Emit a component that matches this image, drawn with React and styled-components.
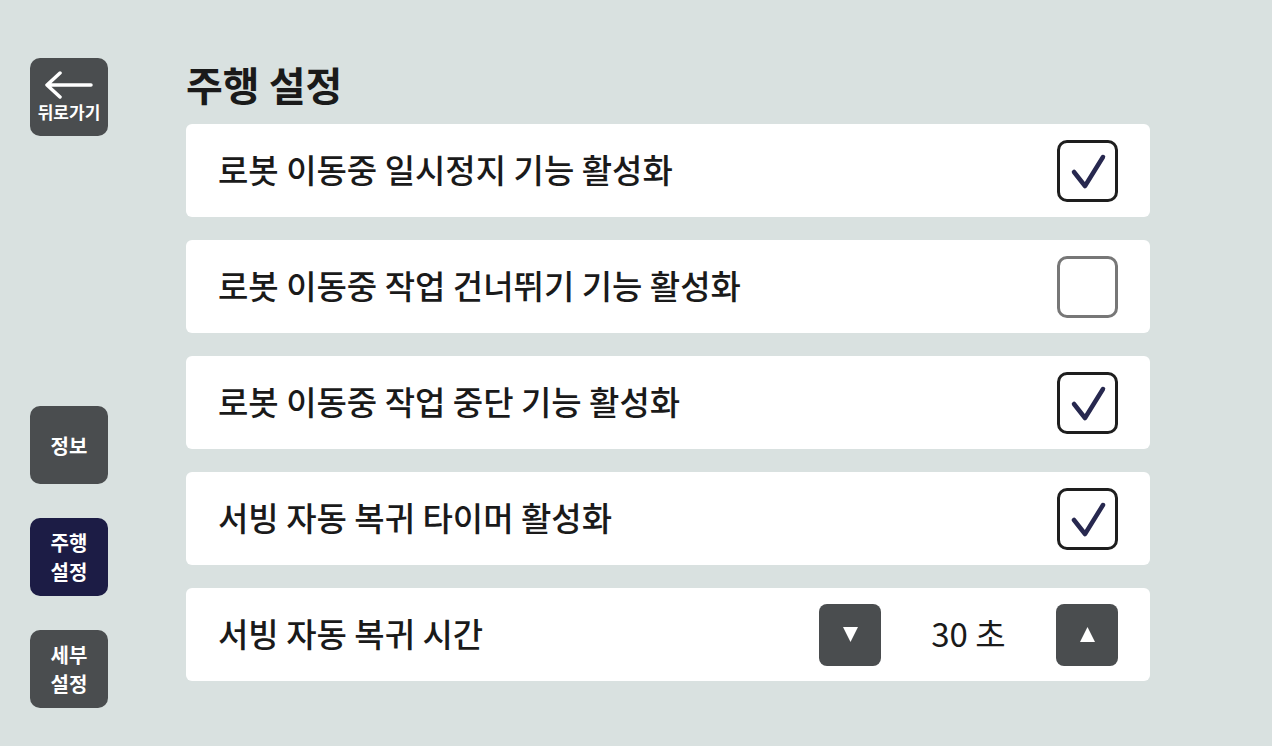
import React, { useState } from 'react';
import styled, { createGlobalStyle } from 'styled-components';

const GlobalStyle = createGlobalStyle`
  html, body {
    margin: 0;
    padding: 0;
    background: #d9e1e0;
    font-family: "Noto Sans CJK KR", "Noto Sans", sans-serif;
  }
`;

const Page = styled.div`
  width: 1272px;
  height: 746px;
  display: flex;
  box-sizing: border-box;
  padding: 58px 0 0 30px;
`;

const Sidebar = styled.div`
  width: 78px;
  display: flex;
  flex-direction: column;
  gap: 34px;
`;

const NavButton = styled.button`
  width: 78px;
  height: 78px;
  border: none;
  border-radius: 10px;
  background: ${p => (p.active ? '#1c1c45' : '#4a4d4f')};
  color: #fff;
  font-family: inherit;
  font-weight: 700;
  font-size: 20px;
  line-height: 29px;
  padding: 0;
  display: flex;
  flex-direction: column;
  align-items: center;
  justify-content: center;
  margin-top: ${p => p.offset || 0}px;
`;

const NavLine = styled.span`
  display: block;
`;

const BackLabel = styled.span`
  font-size: 17px;
  line-height: 22px;
  margin-top: 2px;
`;

const Main = styled.div`
  margin-left: 78px;
  width: 964px;
  display: flex;
  flex-direction: column;
`;

const Title = styled.h1`
  margin: 0 0 14px 0;
  font-size: 40px;
  line-height: 52px;
  font-weight: 700;
  color: #1a1a1a;
`;

const List = styled.div`
  display: flex;
  flex-direction: column;
  gap: 23px;
`;

const Row = styled.div`
  height: 93px;
  background: #fff;
  border-radius: 6px;
  display: flex;
  align-items: center;
  padding: 0 32px 0 32px;
  box-sizing: border-box;
`;

const Label = styled.div`
  flex: 1;
  font-size: 33px;
  font-weight: 500;
  color: #1a1a1a;
  margin-top: -4px;
`;

const Box = styled.div`
  width: 61px;
  height: 62px;
  box-sizing: border-box;
  border: 3px solid ${p => (p.checked ? '#1e1e1e' : '#777')};
  border-radius: 10px;
  display: flex;
  align-items: center;
  justify-content: center;
`;

const Stepper = styled.div`
  display: flex;
  align-items: center;
`;

const StepButton = styled.button`
  width: 62px;
  height: 62px;
  border: none;
  border-radius: 8px;
  background: #4a4d4f;
  display: flex;
  align-items: center;
  justify-content: center;
  padding: 0;
`;

const Value = styled.div`
  width: 175px;
  text-align: center;
  font-size: 33px;
  font-weight: 400;
  color: #1a1a1a;
  margin-top: -4px;
`;

const Check = () => (
  <svg width="40" height="40" viewBox="0 0 40 40">
    <path d="M6 21 L17 35 L35 6" fill="none" stroke="#27284f" strokeWidth="4.5" strokeLinecap="round" strokeLinejoin="round" />
  </svg>
);

const Arrow = () => (
  <svg width="50" height="28" viewBox="0 0 50 28">
    <path d="M47 14 H4 M16 2 L3 14 L16 26" fill="none" stroke="#fff" strokeWidth="3.5" strokeLinecap="round" strokeLinejoin="round" />
  </svg>
);

const Tri = ({ up }) => (
  <svg width="17" height="17" viewBox="0 0 17 17">
    <path d={up ? 'M8.5 1 L16 16 H1 Z' : 'M1 1 H16 L8.5 16 Z'} fill="#fff" />
  </svg>
);

const options = [
  { label: '로봇 이동중 일시정지 기능 활성화', checked: true },
  { label: '로봇 이동중 작업 건너뛰기 기능 활성화', checked: false },
  { label: '로봇 이동중 작업 중단 기능 활성화', checked: true },
  { label: '서빙 자동 복귀 타이머 활성화', checked: true },
];

export default function App() {
  const [items, setItems] = useState(options);
  const [seconds, setSeconds] = useState(30);

  const toggle = i =>
    setItems(items.map((it, j) => (j === i ? { ...it, checked: !it.checked } : it)));

  return (
    <Page>
      <GlobalStyle />
      <Sidebar>
        <NavButton>
          <Arrow />
          <BackLabel>뒤로가기</BackLabel>
        </NavButton>
        <NavButton offset={236}>정보</NavButton>
        <NavButton active>
          <NavLine>주행</NavLine>
          <NavLine>설정</NavLine>
        </NavButton>
        <NavButton>
          <NavLine>세부</NavLine>
          <NavLine>설정</NavLine>
        </NavButton>
      </Sidebar>
      <Main>
        <Title>주행 설정</Title>
        <List>
          {items.map((it, i) => (
            <Row key={it.label}>
              <Label>{it.label}</Label>
              <Box checked={it.checked} onClick={() => toggle(i)}>
                {it.checked && <Check />}
              </Box>
            </Row>
          ))}
          <Row>
            <Label>서빙 자동 복귀 시간</Label>
            <Stepper>
              <StepButton onClick={() => setSeconds(s => Math.max(0, s - 10))}>
                <Tri />
              </StepButton>
              <Value>{seconds} 초</Value>
              <StepButton onClick={() => setSeconds(s => s + 10)}>
                <Tri up />
              </StepButton>
            </Stepper>
          </Row>
        </List>
      </Main>
    </Page>
  );
}
